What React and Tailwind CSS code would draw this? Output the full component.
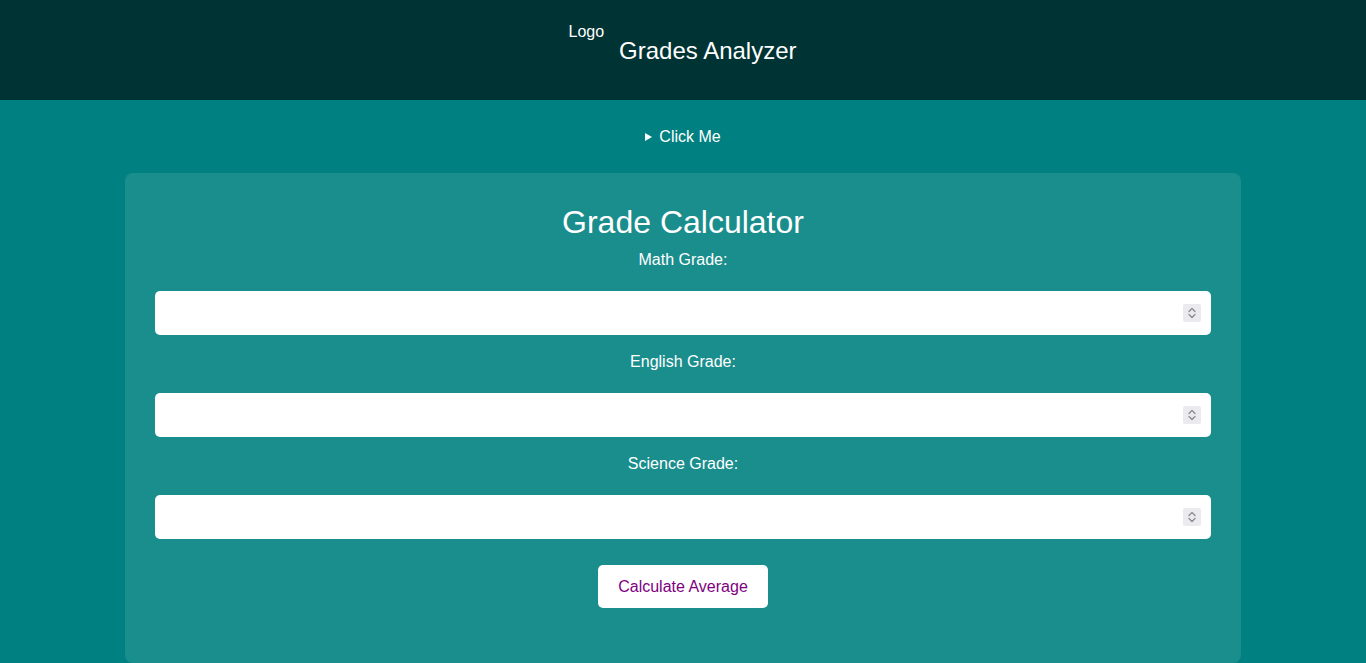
import React, { useState } from 'react';

const fields = [
    { id: 'math', label: 'Math Grade:' },
    { id: 'english', label: 'English Grade:' },
    { id: 'science', label: 'Science Grade:' },
];

// mimic the browser's number spinner shown in the screenshot
const Spinner = () => (
    <div className="pointer-events-none absolute right-[10px] top-1/2 -translate-y-1/2 w-[18px] h-[18px] bg-[#ebebef] rounded-[2px] flex items-center justify-center">
        <svg width="10" height="14" viewBox="0 0 10 14" fill="none" stroke="#8a8a92" strokeWidth="1.3" strokeLinecap="round" strokeLinejoin="round">
            <path d="M2 5.5 L5 2.5 L8 5.5" />
            <path d="M2 8.5 L5 11.5 L8 8.5" />
        </svg>
    </div>
);

export default function App() {
    const [grades, setGrades] = useState({ math: '', english: '', science: '' });
    const [average, setAverage] = useState(null);

    const handleCalc = () => {
        const vals = Object.values(grades).map(v => parseFloat(v) || 0);
        setAverage((vals.reduce((a, b) => a + b, 0) / vals.length).toFixed(2));
    };

    return (
        <div className="min-h-screen bg-[#008080] text-white font-['Liberation_Sans',Arial,sans-serif]">
            {/* Header */}
            <header className="h-[100px] bg-[#003333] flex justify-center items-start pt-[23px]">
                <span className="text-base leading-[18px] -ml-[1px]">Logo</span>
                <h1 className="ml-[15px] mt-[14px] text-[24px] leading-[28px]">Grades Analyzer</h1>
            </header>

            <div className="pt-[28px]">
                <details className="text-center">
                    <summary className="list-none [&::-webkit-details-marker]:hidden h-[18px] text-base leading-[18px] cursor-pointer">
                        <span className="inline-block w-0 h-0 border-y-[4px] border-y-transparent border-l-[7px] border-l-white mr-[7px] align-[1px]" />Click Me
                    </summary>
                    <p className="mt-2">Enter your grades below to get the average.</p>
                </details>
            </div>

            {/* Card */}
            <main className="mt-[27px] w-[1116px] mx-auto bg-white/10 rounded-[8px] px-[30px] pt-[31px] pb-[55px]">
                <h2 className="text-center text-[32px] leading-[37px]">Grade Calculator</h2>
                <div className="mt-[10px]">
                    {fields.map((f, i) => (
                        <div key={f.id} className={i > 0 ? 'mt-[18px]' : ''}>
                            <label htmlFor={f.id} className="block text-center text-base leading-[18px]">{f.label}</label>
                            <div className="relative mt-[22px]">
                                <input
                                    id={f.id}
                                    type="number"
                                    value={grades[f.id]}
                                    onChange={e => setGrades(prev => ({ ...prev, [f.id]: e.target.value }))}
                                    className="block w-full h-[44px] bg-white rounded-[5px] px-3 text-black outline-none [appearance:textfield] [&::-webkit-inner-spin-button]:appearance-none"
                                />
                                <Spinner />
                            </div>
                        </div>
                    ))}
                </div>
                <div className="mt-[26px] flex justify-center">
                    <button onClick={handleCalc} className="h-[43px] w-[170px] bg-white rounded-[5px] text-[#800080] text-base">
                        Calculate Average
                    </button>
                </div>
                {average !== null && <p className="mt-4 text-center">Average: {average}</p>}
            </main>
        </div>
    );
}
